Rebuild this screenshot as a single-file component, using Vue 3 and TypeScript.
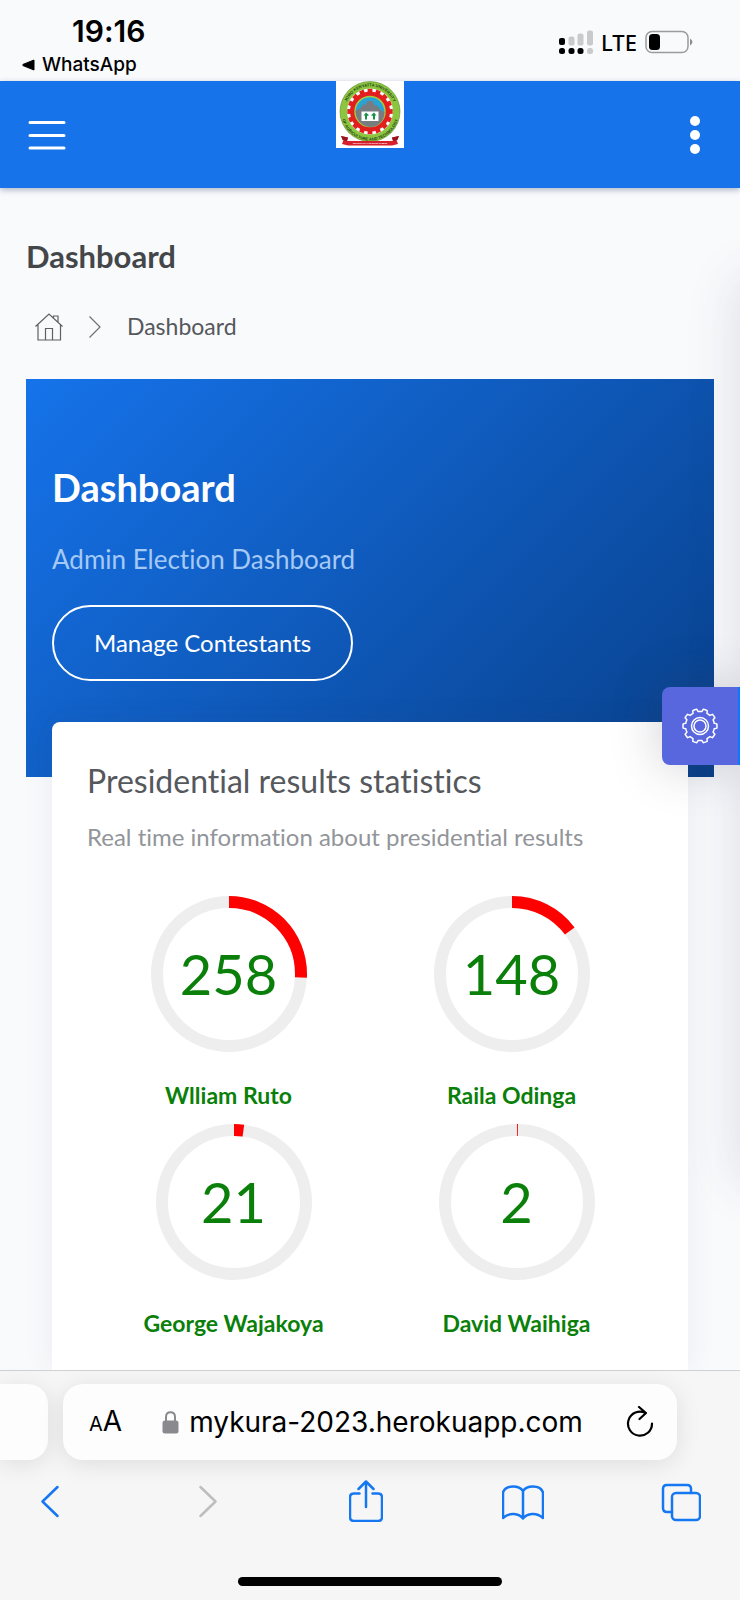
<script setup lang="ts">
import { ref } from 'vue'

interface Candidate {
  name: string
  votes: number
}

// Total number of registered voters, used as the full turn of every ring.
const totalVoters = 1000

const rows: Candidate[][] = [
  [
    { name: 'Wlliam Ruto', votes: 258 },
    { name: 'Raila Odinga', votes: 148 },
  ],
  [
    { name: 'George Wajakoya', votes: 21 },
    { name: 'David Waihiga', votes: 2 },
  ],
]

const address = ref('mykura-2023.herokuapp.com')

// Teeth of the cog wheel in the emblem, as evenly spaced angles.
const teeth: number[] = Array.from({ length: 16 }, (_, i) => i * 22.5)

function gearPath(cx: number, cy: number, outer: number, inner: number, count: number): string {
  const step = 360 / count
  const at = (r: number, deg: number): string => {
    const a = ((deg - 90) * Math.PI) / 180
    return `${(cx + r * Math.cos(a)).toFixed(2)} ${(cy + r * Math.sin(a)).toFixed(2)}`
  }
  let d = ''
  for (let i = 0; i < count; i++) {
    const a = i * step + step / 2
    d += `${i === 0 ? 'M' : 'L'}${at(inner, a - step * 0.3)}L${at(outer, a - step * 0.2)}`
    d += `A${outer} ${outer} 0 0 1 ${at(outer, a + step * 0.2)}L${at(inner, a + step * 0.3)}`
    d += `A${inner} ${inner} 0 0 1 ${at(inner, a + step * 0.7)}`
  }
  return d + 'Z'
}

const gear = gearPath(18, 18, 17, 14.5, 10)
</script>

<template>
  <div class="screen">
    <div class="status">
      <div class="status-left">
        <time class="clock">19:16</time>
        <a class="back-app" href="#">
          <svg width="13" height="12" viewBox="0 0 13 12" aria-hidden="true">
            <path d="M12 1v10L1 6.6q-1-.6 0-1.2z" fill="#000" stroke="#000" stroke-linejoin="round" />
          </svg>
          WhatsApp
        </a>
      </div>
      <div class="status-right">
        <svg width="34" height="25" viewBox="0 0 34 25" aria-hidden="true">
          <g fill="#c9cacc">
            <rect x="9.500" y="6.500" width="6" height="9" rx="2" />
            <rect x="18.500" y="3.500" width="6" height="12" rx="2" />
            <rect x="28" y=".5" width="6" height="15" rx="2" />
            <rect x="28" y="18" width="6" height="6" rx="2.500" />
          </g>
          <rect x="0" y="8" width="6" height="7" rx="2" />
          <rect x="0" y="18" width="6" height="6" rx="2.500" />
          <rect x="9.500" y="18" width="6" height="6" rx="2.500" />
          <rect x="18.500" y="18" width="6" height="6" rx="2.500" />
        </svg>
        <span class="network">LTE</span>
        <svg width="48" height="24" viewBox="0 0 48 24" aria-hidden="true">
          <rect x="1" y="1.500" width="42" height="21" rx="6" fill="none" stroke="#9a9b9d" stroke-width="1.500" />
          <rect x="4" y="4" width="11" height="16" rx="3.500" />
          <path d="M45 8.500q5 3.500 0 7z" fill="#8d8e90" />
        </svg>
      </div>
    </div>

    <header class="topbar">
      <button class="icon-btn menu" type="button" aria-label="Menu">
        <svg width="38" height="30" viewBox="0 0 38 30" aria-hidden="true">
          <path d="M2 2.500h34M2 15.500h34M2 28h34" stroke="#fff" stroke-width="3" stroke-linecap="round" />
        </svg>
      </button>
      <a class="logo" href="#" aria-label="Home">
        <svg width="68" height="67" viewBox="0 0 68 67" aria-hidden="true">
          <defs>
            <path id="arc-top" d="M8.800 30.500a25.200 25.200 0 0 1 50.400 0" />
            <path id="arc-bottom" d="M5 30.500a29 29 0 0 0 58 0" />
          </defs>
          <rect width="68" height="67" fill="#fff" />
          <circle cx="34" cy="30.500" r="30" fill="#8cc63f" stroke="#4e7a2a" stroke-width=".5" />
          <circle cx="34" cy="30.500" r="23" fill="#fff" />
          <g fill="#e31e1e">
            <rect
              v-for="angle in teeth"
              :key="angle"
              x="31.600"
              y="7.800"
              width="4.800"
              height="6"
              :transform="`rotate(${angle} 34 30.500)`"
            />
            <circle cx="34" cy="30.500" r="20" />
          </g>
          <circle cx="34" cy="30.500" r="15" fill="#29a3d6" stroke="#a5cc3c" stroke-width="1.500" />
          <path d="M19.500 30l5-3 3-4 2 1 2-4h5l2 4 3 1 3 4 4 2q0 8-6 12.500-8 5-16 0Q20 39 19.500 30z" fill="#777c80" />
          <rect x="25.500" y="30.500" width="17" height="9.500" fill="#fff" />
          <path d="M30 31.500l-2.500 3h1.500v4h2v-3.500l2-.8zM38 31.500l2.500 3h-1.500v4h-2v-3.500l-2-.8z" fill="#179247" />
          <text class="ring-text">
            <textPath href="#arc-top" startOffset="50%" text-anchor="middle">JOMO KENYATTA UNIVERSITY</textPath>
          </text>
          <text class="ring-text">
            <textPath href="#arc-bottom" startOffset="50%" text-anchor="middle">OF AGRICULTURE AND TECHNOLOGY</textPath>
          </text>
          <path d="M5 55l7 1.500-1 3.500h46l-1-3.500 7-1.500-2.500 4 1.500 4-6 1.500H12L6 63l1.500-4z" fill="#d8202c" />
          <path d="M5 55l7 1.500-1 3.500-4.500-1zM63 55l-7 1.500 1 3.500 4.500-1z" fill="#98151d" />
          <text class="motto" x="34" y="63.200" text-anchor="middle">TECHNOLOGY FOR DEVELOPMENT</text>
        </svg>
      </a>
      <button class="icon-btn more" type="button" aria-label="More">
        <svg width="10" height="38" viewBox="0 0 10 38" aria-hidden="true">
          <g fill="#fff">
            <circle cx="5" cy="5" r="5" />
            <circle cx="5" cy="19" r="5" />
            <circle cx="5" cy="33" r="5" />
          </g>
        </svg>
      </button>
    </header>

    <main class="content">
      <h1 class="page-title">Dashboard</h1>
      <nav class="crumbs" aria-label="Breadcrumb">
        <a class="home" href="#" aria-label="Home">
          <svg width="28" height="28" viewBox="0 0 28 28" fill="none" stroke="#5d6064" stroke-width="1.200" aria-hidden="true">
            <path d="M.5 13.500L14 1l13.500 12.500M3 11.500V27h22.500V11.500M10.500 27V15.500h7V27M18.500 5V3h4.500v6" />
          </svg>
        </a>
        <svg width="12" height="22" viewBox="0 0 12 22" fill="none" stroke="#6d7074" stroke-width="1.200" aria-hidden="true">
          <path d="M.5.500L11 11 .5 21.500" />
        </svg>
        <span>Dashboard</span>
      </nav>

      <section class="hero">
        <h2>Dashboard</h2>
        <p>Admin Election Dashboard</p>
        <button class="manage" type="button">Manage Contestants</button>
      </section>

      <section class="card">
        <h3>Presidential results statistics</h3>
        <p class="card-sub">Real time information about presidential results</p>
        <div v-for="(row, index) in rows" :key="index" class="chart-row">
          <figure v-for="candidate in row" :key="candidate.name" class="chart">
            <div class="ring">
              <svg width="156" height="156" viewBox="0 0 156 156" fill="none" stroke-width="12" aria-hidden="true">
                <circle cx="78" cy="78" r="72" stroke="#eee" />
                <circle
                  cx="78"
                  cy="78"
                  r="72"
                  stroke="#f00"
                  :pathLength="totalVoters"
                  :stroke-dasharray="`${candidate.votes} ${totalVoters}`"
                  transform="rotate(-90 78 78)"
                />
              </svg>
              <span class="votes">{{ candidate.votes }}</span>
            </div>
            <figcaption>{{ candidate.name }}</figcaption>
          </figure>
        </div>
      </section>

      <aside class="drawer" aria-hidden="true"></aside>
      <button class="settings" type="button" aria-label="Settings">
        <svg width="36" height="36" viewBox="0 0 36 36" fill="none" stroke="#fff" stroke-width="1.500" stroke-linejoin="round" aria-hidden="true">
          <path :d="gear" />
          <circle cx="18" cy="18" r="8.500" />
          <circle cx="18" cy="18" r="6" />
        </svg>
      </button>
    </main>

    <footer class="browser">
      <div class="tabs">
        <div class="tab-prev"></div>
        <div class="address">
          <button class="text-size" type="button" aria-label="Text size"><small>A</small>A</button>
          <svg class="lock" width="17" height="23" viewBox="0 0 17 23" aria-hidden="true">
            <rect x=".5" y="9.500" width="16" height="13" rx="2.500" fill="#8a8a8e" />
            <path d="M4 10.500V6q0-4.700 4.500-4.700T13 6v4.500" fill="none" stroke="#8a8a8e" stroke-width="2" />
          </svg>
          <input v-model="address" class="url" type="text" aria-label="Address" />
          <button class="reload" type="button" aria-label="Reload">
            <svg width="28" height="32" viewBox="0 0 28 32" fill="none" stroke="#000" stroke-width="2.200" stroke-linecap="round" stroke-linejoin="round" aria-hidden="true">
              <path d="M26 17.500A12 12 0 1 1 19.500 7M13 1L20 7l-6.500 6" />
            </svg>
          </button>
        </div>
      </div>
      <div class="tools">
        <button type="button" aria-label="Back">
          <svg width="18" height="42" viewBox="0 0 18 42"><path d="M16.500 7L1.500 21.500 16.500 36" /></svg>
        </button>
        <button type="button" aria-label="Forward" disabled>
          <svg width="18" height="42" viewBox="0 0 18 42"><path d="M1.500 7l15 14.500L1.500 36" /></svg>
        </button>
        <button type="button" aria-label="Share">
          <svg width="34" height="42" viewBox="0 0 34 42">
            <path d="M10.500 13.500H5q-4 0-4 4V37q0 4 4 4h24q4 0 4-4V17.500q0-4-4-4h-5.500M17 27V2M9.500 9L17 1.500 24.500 9" />
          </svg>
        </button>
        <button type="button" aria-label="Bookmarks">
          <svg width="42" height="42" viewBox="0 0 42 42">
            <path d="M21 10.500v28q-3-4-9-4.500-6-.5-11 4V12.500Q3 6.500 11 6.500q7 0 10 4.500 3-4.500 10-4.500 8 0 10 6V38q-5-4.500-11-4-6 .5-9 4.500" />
          </svg>
        </button>
        <button type="button" aria-label="Tabs">
          <svg width="40" height="42" viewBox="0 0 40 42">
            <rect x="11" y="13" width="28" height="27" rx="4" />
            <path d="M11 32H6q-4 0-4-4V9q0-4 4-4h20q4 0 4 4v4" />
          </svg>
        </button>
      </div>
      <div class="home-bar"></div>
    </footer>
  </div>
</template>

<style>
body {
  background: #f9fafc;
}
</style>

<style scoped>
.screen {
  display: flex;
  flex-direction: column;
  min-height: 100vh;
  overflow: hidden;
  background: #f9fafc;
  font-family: Lato, "Open Sans", sans-serif;
  font-variant-ligatures: none;
  color: #55585c;
}

.screen * {
  box-sizing: border-box;
}

button {
  padding: 0;
  border: 0;
  background: none;
  font: inherit;
  color: inherit;
}

svg {
  display: block;
}

h1,
h2,
h3,
p,
figure {
  margin: 0;
}

.status {
  display: flex;
  justify-content: space-between;
  height: 81px;
  padding: 12px 47px 0 22px;
  font-family: Inter, "Liberation Sans", sans-serif;
  color: #000;
}

.clock {
  display: block;
  padding-left: 50px;
  font-size: 30px;
  font-weight: 600;
  line-height: 38px;
}

.back-app {
  display: flex;
  align-items: center;
  gap: 7px;
  font-size: 19px;
  font-weight: 500;
  line-height: 30px;
  color: #000;
  text-decoration: none;
}

.status-right {
  display: flex;
  align-items: center;
  gap: 8px;
  height: 60px;
}

.network {
  font-family: "Noto Sans", sans-serif;
  font-size: 22px;
  font-weight: 500;
  line-height: 28px;
}

.topbar {
  position: relative;
  display: grid;
  grid-template-columns: 1fr auto 1fr;
  height: 107px;
  background: #1673ea;
  box-shadow: 0 2px 6px rgba(30, 50, 110, 0.35);
}

.icon-btn {
  height: 107px;
}

.menu {
  justify-self: start;
  margin-left: 28px;
}

.more {
  justify-self: end;
  margin-right: 40px;
}

.ring-text {
  font-family: "Liberation Sans", sans-serif;
  font-size: 4px;
  font-weight: 700;
  fill: #24401a;
}

.motto {
  font-family: "Liberation Sans", sans-serif;
  font-size: 2px;
  font-weight: 700;
  fill: #fff;
}

.content {
  position: relative;
  display: flex;
  flex: 1;
  flex-direction: column;
  padding: 48px 26px 0;
}

.page-title {
  font-size: 31px;
  font-weight: 700;
  line-height: 40px;
  color: #44474a;
}

.crumbs {
  display: flex;
  align-items: center;
  margin: 32px 0 34px;
  padding-left: 9px;
  font-size: 23px;
  line-height: 37px;
}

.home {
  margin-right: 26px;
}

.crumbs span {
  margin-left: 26px;
}

.hero {
  height: 398px;
  padding: 84px 26px 0;
  background: linear-gradient(135deg, #1673ea, #08408b);
  color: #fff;
}

.hero h2 {
  font-size: 38px;
  font-weight: 700;
  line-height: 48px;
}

.hero p {
  margin: 30px 0 28px;
  font-size: 26px;
  line-height: 36px;
  color: #a5c9f5;
}

.manage {
  padding: 0 40px;
  border: 2px solid #fff;
  border-radius: 38px;
  font-size: 24px;
  line-height: 72px;
}

.card {
  flex: 1;
  margin: -55px 26px 0;
  padding: 37px 35px 8px;
  border-radius: 8px 8px 0 0;
  background: #fff;
  box-shadow: 0 0 30px rgba(69, 65, 100, 0.08);
}

.card h3 {
  font-size: 32px;
  font-weight: 400;
  line-height: 44px;
  color: #55585c;
}

.card-sub {
  margin: 16px 0 41px;
  font-size: 24px;
  line-height: 36px;
  color: #929599;
}

.chart-row {
  display: grid;
  grid-template-columns: 1fr 1fr;
}

.chart-row + .chart-row {
  margin: 0 -5px 0 5px;
}

.chart {
  display: flex;
  flex-direction: column;
  align-items: center;
}

.ring {
  display: grid;
  place-items: center;
}

.ring > * {
  grid-area: 1 / 1;
}

.votes {
  font-size: 56px;
  line-height: 64px;
  color: #0a7f0a;
}

.chart figcaption {
  padding: 25px 0 11px;
  font-size: 23px;
  font-weight: 700;
  line-height: 36px;
  color: #0a7f0a;
}

.drawer {
  position: absolute;
  top: 92px;
  left: 100%;
  width: 200px;
  height: 900px;
  background: #fff;
  box-shadow: 0 0 50px rgba(69, 65, 100, 0.16);
}

.settings {
  position: absolute;
  top: 499px;
  right: 0;
  display: flex;
  align-items: center;
  width: 78px;
  height: 78px;
  padding-left: 20px;
  border-right: 2px solid #0a78ff;
  border-radius: 8px 0 0 8px;
  background: #5867dd;
  box-shadow: 0 0 50px rgba(60, 60, 80, 0.25);
}

.browser {
  position: relative;
  border-top: 1px solid #cfd1d3;
  background: #f6f6f7;
  font-family: Inter, "Liberation Sans", sans-serif;
  color: #000;
}

.tabs {
  display: flex;
  gap: 15px;
  padding: 13px 63px 0 0;
}

.tab-prev {
  width: 48px;
  border-radius: 0 20px 20px 0;
  background: #fdfdfd;
  box-shadow: 0 4px 24px rgba(0, 0, 0, 0.1);
}

.address {
  display: flex;
  flex: 1;
  align-items: center;
  height: 76px;
  padding: 0 23px 0 26px;
  border-radius: 20px;
  background: #fdfdfd;
  box-shadow: 0 4px 24px rgba(0, 0, 0, 0.1);
}

.text-size {
  font-size: 28px;
  line-height: 36px;
}

.text-size small {
  font-size: 20px;
}

.lock {
  margin: 0 10px 0 40px;
}

.url {
  flex: 1;
  min-width: 0;
  height: 44px;
  padding: 0;
  border: 0;
  outline: 0;
  background: none;
  font: inherit;
  font-size: 28px;
  color: inherit;
}

.tools {
  display: flex;
  justify-content: space-between;
  padding: 20px 38px 0 29px;
}

.tools button {
  display: grid;
  justify-items: center;
  width: 42px;
}

.tools svg {
  fill: none;
  stroke: #1677f2;
  stroke-width: 2.5px;
  stroke-linecap: round;
  stroke-linejoin: round;
}

.tools button:disabled svg {
  stroke: #bdbec0;
}

.home-bar {
  width: 264px;
  height: 9px;
  margin: 55px auto 14px;
  border-radius: 5px;
  background: #000;
}
</style>
